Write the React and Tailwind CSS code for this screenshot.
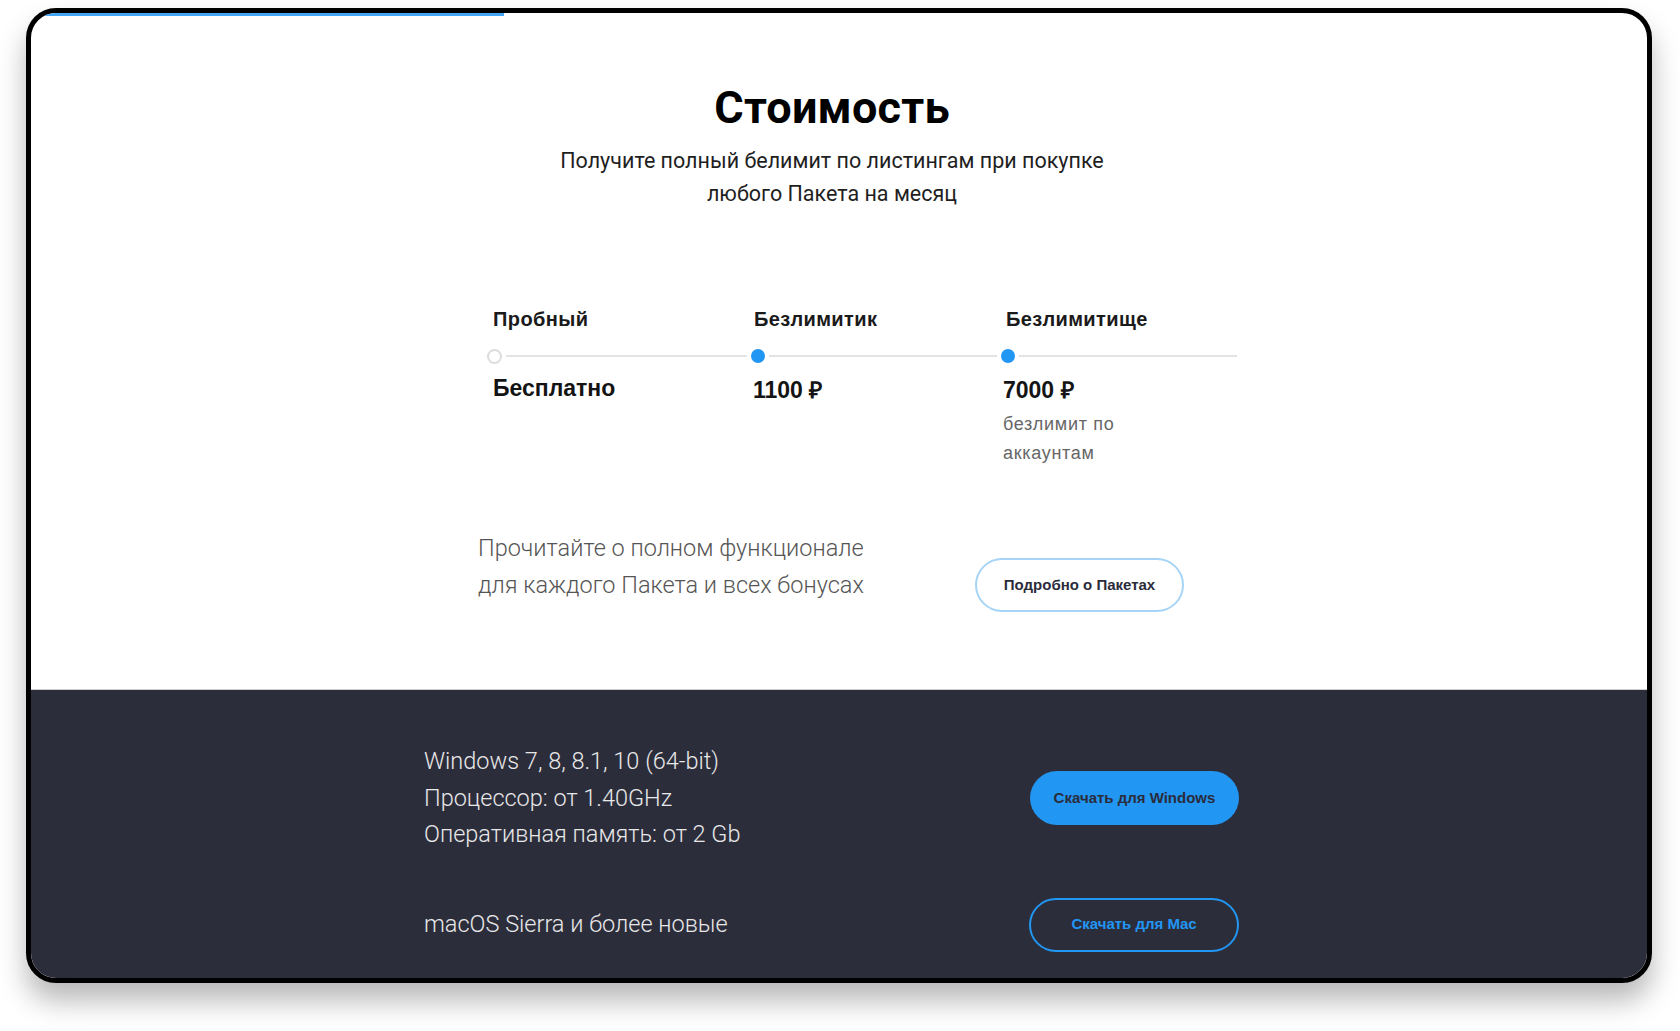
import React from "react";

const arial = { fontFamily: "'Liberation Sans', Arial, sans-serif" };

const plans = [
  { name: "Пробный", price: "Бесплатно", note: null, hollow: true, width: "w-[264px]", pad: "pl-[6px]" },
  { name: "Безлимитик", price: "1100 ₽", note: null, hollow: false, width: "w-[250px]", pad: "pl-[3px]" },
  { name: "Безлимитище", price: "7000 ₽", note: ["безлимит по", "аккаунтам"], hollow: false, width: "w-[240px]", pad: "pl-[5px]" },
];

function Dot({ hollow }) {
  if (hollow) {
    return <div className="w-[15px] h-[15px] rounded-full border-2 border-[#dcdcdc] bg-white shrink-0" />;
  }
  return <div className="w-[14px] h-[14px] rounded-full bg-[#2196f3] shrink-0" />;
}

export default function App() {
  return (
    <div className="w-full h-screen bg-white overflow-hidden" style={{ fontFamily: "Roboto, 'Liberation Sans', sans-serif" }}>
      <div className="ml-[26px] mt-[8px] w-[1626px] h-[975px] rounded-[30px] border-[5px] border-black overflow-hidden flex flex-col bg-white shadow-[0_18px_28px_rgba(0,0,0,0.28)]">
        {/* top progress line */}
        <div className="h-[3px] w-[473px] bg-[#42a5f5] shrink-0" />

        {/* pricing */}
        <section className="flex-1 flex flex-col pr-[14px]">
          <h1 className="mt-[65px] text-center text-[45px] leading-[53px] font-bold text-black tracking-[0.2px]">Стоимость</h1>
          <p className="mt-[10px] text-center text-[21.5px] leading-[33px] text-[#1f1f1f]">
            Получите полный белимит по листингам при покупке
            <br />
            любого Пакета на месяц
          </p>

          <div className="ml-[456px] mt-[97px] w-[754px] flex" style={arial}>
            {plans.map((p, i) => (
              <div key={i} className={`${p.width} flex flex-col`}>
                <div className={`${p.pad} text-[20px] leading-[24px] font-bold tracking-[0.4px] text-[#1a1a1a]`}>{p.name}</div>
                <div className="mt-[18px] h-[14px] flex items-center">
                  <Dot hollow={p.hollow} />
                  <div className="ml-[4px] mr-[4px] flex-1 h-[2px] bg-[#e3e3e3]" />
                </div>
                <div className={`mt-[11px] ${i === 0 ? "pl-[6px]" : "pl-[2px] pt-[2px]"} text-[23px] leading-[28px] font-bold text-[#141414]`}>{p.price}</div>
                {p.note && (
                  <div className="mt-[6px] pl-[2px] text-[18px] leading-[29px] tracking-[0.7px] text-[#666]">
                    {p.note[0]}
                    <br />
                    {p.note[1]}
                  </div>
                )}
              </div>
            ))}
          </div>

          <div className="ml-[447px] mt-[62px] flex items-start">
            <p className="w-[497px] text-[23.5px] leading-[36.5px] font-light text-[#555]">
              Прочитайте о полном функционале
              <br />
              для каждого Пакета и всех бонусах
            </p>
            <button className="mt-[28px] w-[209px] h-[54px] rounded-full border-2 border-[#a6d4f7] bg-white text-[15px] font-bold text-[#2b2c3b]" style={arial}>
              Подробно о Пакетах
            </button>
          </div>
        </section>

        {/* requirements */}
        <section className="h-[289px] shrink-0 bg-[#2c2d3b] border-t border-[#cfcfcf]">
          <div className="ml-[393px] w-[815px] pt-[53px]">
            <div className="flex items-center justify-between">
              <div className="text-[23.5px] leading-[36.5px] font-light text-[#e8e8e8]">
                <div>Windows 7, 8, 8.1, 10 (64-bit)</div>
                <div>Процессор: от 1.40GHz</div>
                <div>Оперативная память: от 2 Gb</div>
              </div>
              <button className="w-[209px] h-[54px] rounded-full bg-[#2196f3] text-[15px] font-bold text-[#2b2c3b]" style={arial}>
                Скачать для Windows
              </button>
            </div>
            <div className="mt-[45px] flex items-center justify-between">
              <div className="text-[23.5px] leading-[36.5px] font-light text-[#e8e8e8]">macOS Sierra и более новые</div>
              <button className="w-[210px] h-[54px] rounded-full border-2 border-[#2196f3] text-[15px] font-bold text-[#2196f3]" style={arial}>
                Скачать для Mac
              </button>
            </div>
          </div>
        </section>
      </div>
    </div>
  );
}
